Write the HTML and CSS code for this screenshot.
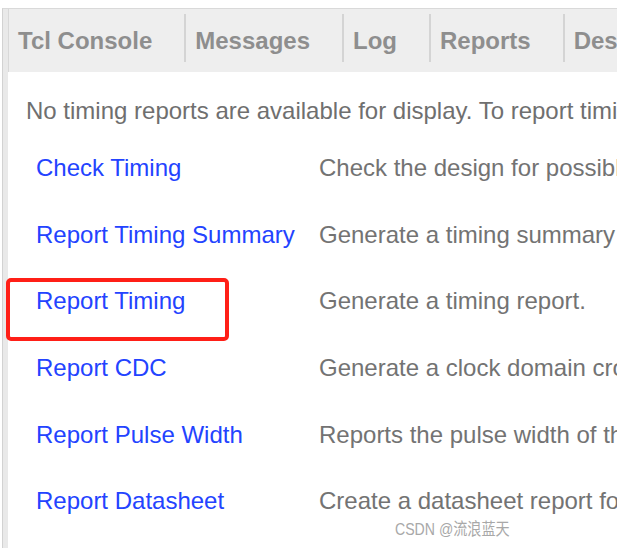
FILE: index.html
```html
<!DOCTYPE html>
<html>
<head>
<meta charset="utf-8">
<link rel="stylesheet" href="styles.css">
</head>
<body>
<div class="panel">
  <div class="strip"></div>
  <div class="main">
    <div class="tabs">
      <div class="tab">Tcl Console</div>
      <div class="tab">Messages</div>
      <div class="tab">Log</div>
      <div class="tab">Reports</div>
      <div class="tab">Design Runs</div>
    </div>
    <div class="content">
      <div class="intro">No timing reports are available for display. To report timing, click one of the links below.</div>
      <div class="list">
        <a class="link">Check Timing</a><span class="desc">Check the design for possible timing problems.</span>
        <a class="link">Report Timing Summary</a><span class="desc">Generate a timing summary to understand if the design met timing.</span>
        <a class="link">Report Timing</a><span class="desc">Generate a timing report.</span>
        <a class="link">Report CDC</a><span class="desc">Generate a clock domain crossing report.</span>
        <a class="link">Report Pulse Width</a><span class="desc">Reports the pulse width of the clock pins.</span>
        <a class="link">Report Datasheet</a><span class="desc">Create a datasheet report for the design.</span>
      </div>
    </div>
  </div>
</div>
<div class="highlight"></div>
<div class="watermark">CSDN @流浪蓝天</div>
</body>
</html>
```
FILE: styles.css
```css
html, body {
  margin: 0;
  padding: 0;
  background: #ffffff;
}
body {
  width: 617px;
  height: 548px;
  overflow: hidden;
  position: relative;
  font-family: "Liberation Sans", Arial, sans-serif;
  white-space: nowrap;
}
.panel {
  margin: 8px 0 0 2px;
  border-top: 1px solid #d9d9d9;
  border-left: 1px solid #d2d2d2;
  display: flex;
  height: 539px;
}
.strip {
  width: 5px;
  background: #e9e9e9;
  flex: none;
}
.main {
  flex: 1;
  min-width: 0;
  overflow: hidden;
}
.tabs {
  height: 63px;
  background: #eeeeee;
  display: flex;
  align-items: flex-start;
  padding-top: 5px;
  box-sizing: border-box;
  border-left: 1px solid #d8d8d8;
}
.tab {
  height: 48px;
  box-sizing: border-box;
  padding: 6px 32px 0 9px;
  display: flex;
  align-items: center;
  font-size: 24px;
  font-weight: bold;
  color: #8e8e8e;
  border-right: 2px solid #d4d4d4;
  flex: none;
}
.content {
  padding: 25px 0 0 18px;
}
.intro {
  font-size: 24px;
  line-height: 28px;
  color: #6f6f6f;
}
.list {
  margin-top: 10px;
  padding-left: 10px;
  display: grid;
  grid-template-columns: 283px 1fr;
  grid-auto-rows: 66.6px;
  align-items: center;
  font-size: 24px;
}
.link {
  color: #2343ff;
}
.desc {
  color: #737373;
}
.highlight {
  position: absolute;
  left: 6px;
  top: 278px;
  width: 223px;
  height: 63px;
  box-sizing: border-box;
  border: 4px solid #ff1f17;
  border-radius: 5px;
}
.watermark {
  position: absolute;
  left: 395px;
  top: 518px;
  font-size: 17px;
  line-height: 24px;
  color: #a8a8a8;
  transform: scaleX(0.83);
  transform-origin: left center;
  font-family: "Liberation Sans", "Noto Sans CJK SC", sans-serif;
}
```
